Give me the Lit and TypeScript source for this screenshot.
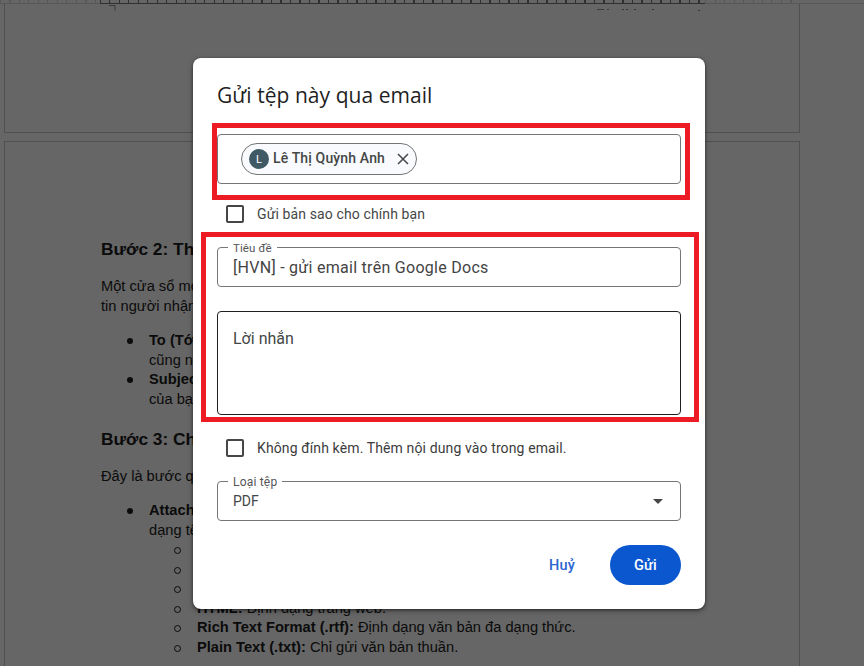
import { LitElement, html, css } from "lit";
import { customElement } from "lit/decorators.js";

@customElement("app-root")
export class AppRoot extends LitElement {
  static styles = css`
    :host {
      display: block;
      position: relative;
      width: 864px;
      height: 666px;
      overflow: hidden;
      background: #666;
      font-family: "Liberation Sans", Arial, sans-serif;
    }
    .ruler {
      display: flex;
      height: 4px;
    }
    .ruler div {
      box-sizing: border-box;
      border-bottom: 1px solid #585858;
      background: repeating-linear-gradient(90deg, #585858 0 1px, transparent 1px 9.5px);
    }
    .ruler .left { width: 100px; }
    .ruler .mid {
      width: 605px;
      border-bottom-color: #303030;
      background: repeating-linear-gradient(90deg, #303030 0 1px, transparent 1px 9.5px);
    }
    .ruler .right { width: 94px; }
    .ruler .end { flex: 1; background: none; }
    .sheet {
      box-sizing: border-box;
      width: 796px;
      margin-left: 4px;
      border: 1px solid #505050;
    }
    .sheet.first {
      height: 129px;
      border-top: none;
      margin-bottom: 8px;
    }
    .sheet.first svg { display: block; }
    .sheet.second {
      height: 560px;
      padding: 97px 0 0 96px;
      border-bottom: none;
      color: #0b0b0b;
      font-size: 14.67px;
      line-height: 19.5px;
    }
    h2 {
      margin: 0 0 18px;
      font-size: 17.33px;
      line-height: 20px;
      font-weight: 700;
    }
    p { margin: 0 0 15px; }
    ul {
      margin: 0 0 19.5px;
      padding-left: 48px;
      list-style: none;
    }
    ul ul { margin: 0; }
    li { position: relative; }
    li::before {
      content: "";
      position: absolute;
      left: -22px;
      top: 7px;
      width: 6px;
      height: 6px;
      border-radius: 50%;
      background: #0b0b0b;
    }
    ul ul li::before {
      left: -23px;
      box-sizing: border-box;
      width: 7px;
      height: 7px;
      border: 1px solid #0b0b0b;
      background: none;
    }
    .dialog {
      position: absolute;
      left: 193px;
      top: 58px;
      box-sizing: border-box;
      width: 512px;
      height: 551px;
      padding: 23px 24px 24px;
      display: flex;
      flex-direction: column;
      background: #fff;
      border-radius: 8px;
      box-shadow: 0 1px 3px rgba(0, 0, 0, 0.5), 0 2px 6px rgba(0, 0, 0, 0.25);
      color: #1f1f1f;
      font-family: Roboto, "Liberation Sans", sans-serif;
    }
    h1 {
      margin: 0 0 25px;
      font-family: "Open Sans", Roboto, sans-serif;
      font-size: 21px;
      line-height: 28px;
      font-weight: 400;
      letter-spacing: 0.05px;
    }
    .field {
      position: relative;
      box-sizing: border-box;
      border: 1px solid #747775;
      border-radius: 4px;
      display: flex;
      align-items: center;
      padding: 0 15px;
    }
    .to {
      height: 50px;
      padding-left: 23px;
    }
    .chip {
      display: flex;
      align-items: center;
      box-sizing: border-box;
      width: 176px;
      height: 32px;
      padding: 0 4px 0 7px;
      gap: 4px;
      border: 1px solid #747775;
      border-radius: 16px;
      background: #f8fafd;
      color: #444746;
      font-size: 14px;
      font-weight: 500;
      letter-spacing: 0.15px;
    }
    .avatar {
      width: 20px;
      height: 20px;
      flex: none;
      border-radius: 50%;
      background: #3f5a64;
      color: #fff;
      font-size: 11px;
      font-weight: 400;
      display: flex;
      align-items: center;
      justify-content: center;
    }
    .chip .name {
      flex: 1;
      white-space: nowrap;
      margin-top: -2px;
    }
    .check {
      display: flex;
      align-items: center;
      gap: 13px;
      height: 18px;
      font-size: 14px;
      letter-spacing: 0.12px;
      color: #444746;
    }
    .check i {
      box-sizing: border-box;
      width: 18px;
      height: 18px;
      border: 2px solid #444746;
      border-radius: 2px;
    }
    .check.copy { margin: 21px 0 24px 9px; }
    .check.attach { margin: 24px 0 24px 9px; color: #3c3c3c; }
    .subject {
      height: 40px;
      margin-bottom: 24px;
      font-size: 16px;
      color: #444;
      letter-spacing: 0.28px;
    }
    .legend {
      position: absolute;
      left: 10px;
      top: -7px;
      padding: 0 5px;
      background: #fff;
      font-size: 11.5px;
      line-height: 14px;
      letter-spacing: 0.1px;
      color: #555;
    }
    .type .legend {
      font-size: 12px;
      letter-spacing: 0.2px;
    }
    .message {
      box-sizing: border-box;
      height: 104px;
      padding: 17px 15px;
      border: 1px solid #1f1f1f;
      border-radius: 4px;
      font-size: 16px;
      line-height: 20px;
      color: #444746;
    }
    .type {
      height: 40px;
      justify-content: space-between;
      font-size: 14px;
      color: #444746;
      padding-right: 17px;
    }
    .caret {
      width: 0;
      height: 0;
      border-left: 5px solid transparent;
      border-right: 5px solid transparent;
      border-top: 5px solid #444746;
    }
    .actions {
      display: flex;
      justify-content: flex-end;
      align-items: center;
      gap: 23px;
      margin-top: 24px;
    }
    .btn {
      font-family: Roboto, sans-serif;
      font-size: 14.5px;
      font-weight: 500;
      border: none;
      background: none;
      padding: 0;
      height: 40px;
      border-radius: 20px;
      color: #2a66d0;
      letter-spacing: 0.2px;
    }
    .btn.cancel { width: 50px; }
    .btn.send {
      width: 71px;
      background: #0b57d0;
      color: #fff;
    }
    .mark {
      position: absolute;
      box-sizing: border-box;
      border: 5px solid #ed1c24;
      pointer-events: none;
    }
    .mark.a { left: 19px; top: 65px; width: 478px; height: 77px; }
    .mark.b { left: 8px; top: 174px; width: 498px; height: 190px; }
  `;

  render() {
    return html`
      <div class="ruler">
        <div class="left"></div>
        <div class="mid"></div>
        <div class="right"></div>
        <div class="end"></div>
      </div>
      <div class="sheet first">
        <svg width="794" height="12" fill="none" stroke="#3a3a3a">
          <path d="M104 1.5h6v5" />
          <path d="M592 5.5h7M602 5.5h2M617 5.5h2M621 5.5h2M629 5.5h2M647 5.5h2M693 6.5h2" />
        </svg>
      </div>
      <div class="sheet second">
        <h2>Bước 2: Thiết lập email</h2>
        <p>Một cửa sổ mới sẽ xuất hiện, nhập thông<br />tin người nhận.</p>
        <ul>
          <li><b>To (Tới):</b> Nhập địa chỉ email,<br />cũng như người nhận.</li>
          <li><b>Subject (Tiêu đề):</b> Nhập tiêu đề<br />của bạn.</li>
        </ul>
        <h2>Bước 3: Chọn định dạng</h2>
        <p>Đây là bước quan trọng nhất.</p>
        <ul>
          <li>
            <b>Attach as:</b> Chọn tệp đính kèm<br />dạng tệp.
            <ul>
              <li><b>PDF:</b> Định dạng phổ biến.</li>
              <li><b>Word:</b> Định dạng văn bản.</li>
              <li><b>OpenDocument:</b> Định dạng mở.</li>
              <li><b>HTML:</b> Định dạng trang web.</li>
              <li><b>Rich Text Format (.rtf):</b> Định dạng văn bản đa dạng thức.</li>
              <li><b>Plain Text (.txt):</b> Chỉ gửi văn bản thuần.</li>
            </ul>
          </li>
        </ul>
      </div>
      <div class="dialog">
        <h1>Gửi tệp này qua email</h1>
        <div class="field to">
          <div class="chip">
            <span class="avatar">L</span>
            <span class="name">Lê Thị Quỳnh Anh</span>
            <svg width="18" height="18" viewBox="0 0 18 18" fill="none" stroke="#444746" stroke-width="1.5">
              <path d="M4 4l10 10M14 4L4 14" />
            </svg>
          </div>
        </div>
        <div class="check copy"><i></i><span>Gửi bản sao cho chính bạn</span></div>
        <div class="field subject">
          <span class="legend">Tiêu đề</span>
          [HVN] - gửi email trên Google Docs
        </div>
        <div class="message">Lời nhắn</div>
        <div class="check attach"><i></i><span>Không đính kèm. Thêm nội dung vào trong email.</span></div>
        <div class="field type">
          <span class="legend">Loại tệp</span>
          <span>PDF</span>
          <span class="caret"></span>
        </div>
        <div class="actions">
          <button class="btn cancel">Huỷ</button>
          <button class="btn send">Gửi</button>
        </div>
        <div class="mark a"></div>
        <div class="mark b"></div>
      </div>
    `;
  }
}
